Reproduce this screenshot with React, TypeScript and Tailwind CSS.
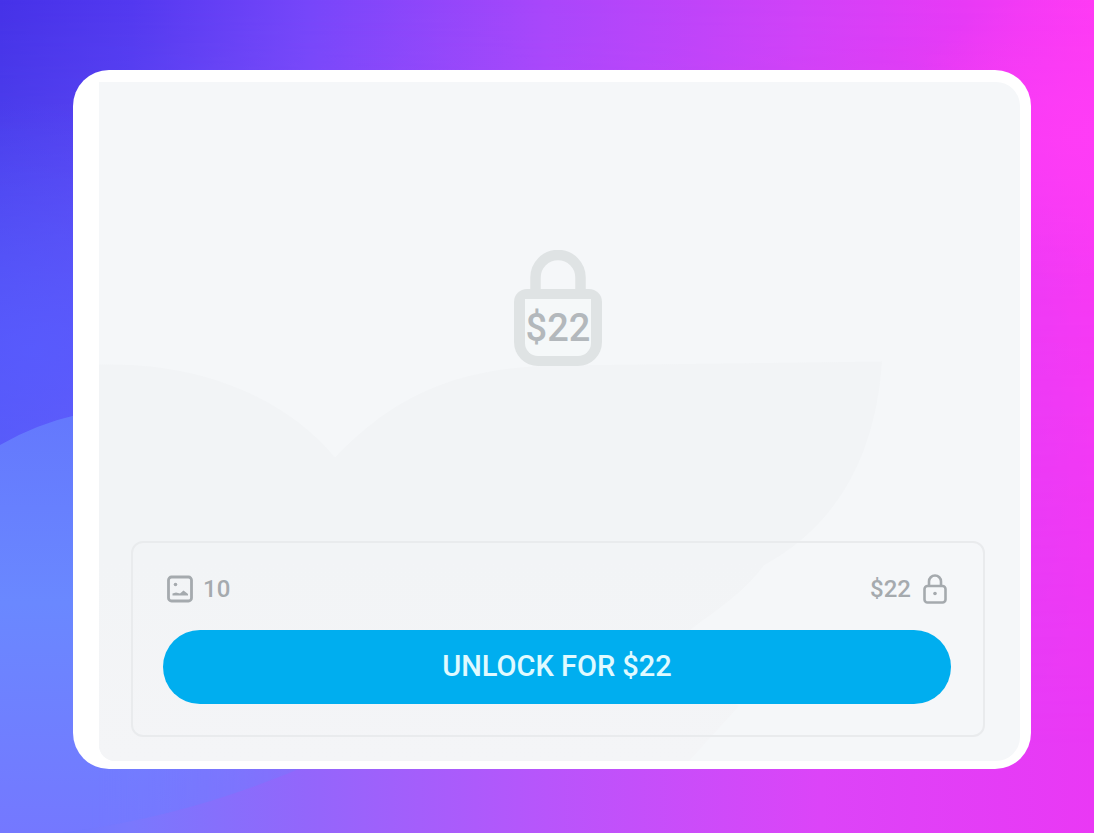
interface IconProps {
    className?: string;
}

interface LockedPostProps {
    mediaCount: number;
    price: string;
}

const ImageIcon: React.FC<IconProps> = ({className}) => (
    <svg viewBox="0 0 26 28" fill="none" className={className} aria-hidden="true">
        <rect x="1.5" y="2" width="23" height="24" rx="3" stroke="currentColor" strokeWidth="2.8"/>
        <circle cx="8.5" cy="9.5" r="1.8" fill="currentColor"/>
        <path d="M5.5 20.5 V18.5 L9 17.5 L13 18.5 L16.5 15.5 L21 19 V20.5 Z" fill="currentColor"/>
    </svg>
);

const SmallLockIcon: React.FC<IconProps> = ({className}) => (
    <svg viewBox="0 0 24 30" fill="none" className={className} aria-hidden="true">
        <path d="M6 12 V7.5 A6 6 0 0 1 18 7.5 V12" stroke="currentColor" strokeWidth="2.6"/>
        <rect x="1.5" y="12" width="21" height="16.5" rx="3" stroke="currentColor" strokeWidth="2.6"/>
        <circle cx="12" cy="19.5" r="1.8" fill="currentColor"/>
    </svg>
);

const BigLockIcon: React.FC<IconProps> = ({className}) => (
    <svg viewBox="0 0 88 116" fill="none" className={className} aria-hidden="true">
        <path d="M21.5 42 V27.5 A22.5 22.5 0 0 1 66.5 27.5 V42" stroke="#dfe3e4" strokeWidth="10.5"/>
        <path
            d="M13 39 H75 A13 13 0 0 1 88 52 V92 A24 24 0 0 1 64 116 H24 A24 24 0 0 1 0 92 V52 A13 13 0 0 1 13 39 Z"
            fill="#dfe3e4"
        />
        <path d="M11 49 H77 V93 A13 13 0 0 1 64 106 H24 A13 13 0 0 1 11 93 Z" fill="#f5f8f9"/>
    </svg>
);

const Backdrop: React.FC = () => (
    <svg
        viewBox="0 0 1094 833"
        preserveAspectRatio="none"
        className="absolute inset-0 -z-10 h-full w-full"
        aria-hidden="true"
    >
        <defs>
            <linearGradient id="top" x1="0" y1="0" x2="1" y2="0">
                <stop offset="0" stopColor="#4632e8"/>
                <stop offset="0.12" stopColor="#5339f0"/>
                <stop offset="0.28" stopColor="#7646fa"/>
                <stop offset="0.5" stopColor="#a947fb"/>
                <stop offset="0.73" stopColor="#d042f8"/>
                <stop offset="0.88" stopColor="#e83af6"/>
                <stop offset="1" stopColor="#ff3af4"/>
            </linearGradient>
            <linearGradient id="bottom" x1="0" y1="0" x2="1" y2="0">
                <stop offset="0" stopColor="#6478ff"/>
                <stop offset="0.12" stopColor="#7a78fd"/>
                <stop offset="0.28" stopColor="#9366fb"/>
                <stop offset="0.5" stopColor="#b855fb"/>
                <stop offset="0.75" stopColor="#dc44f8"/>
                <stop offset="1" stopColor="#ea38f5"/>
            </linearGradient>
            <linearGradient id="fade" x1="0" y1="0" x2="0" y2="1">
                <stop offset="0" stopColor="#fff" stopOpacity="0"/>
                <stop offset="0.9" stopColor="#fff"/>
            </linearGradient>
            <linearGradient id="blob" x1="0" y1="0" x2="0" y2="1">
                <stop offset="0" stopColor="#6478fd"/>
                <stop offset="0.45" stopColor="#6a88ff"/>
                <stop offset="1" stopColor="#7478ff"/>
            </linearGradient>
            <linearGradient id="blobEdge" x1="0" y1="0" x2="1" y2="0">
                <stop offset="0.2" stopColor="#fff"/>
                <stop offset="1" stopColor="#fff" stopOpacity="0"/>
            </linearGradient>
            <radialGradient id="left" cx="0.03" cy="0.42" r="0.3">
                <stop offset="0" stopColor="#585cff" stopOpacity="0.8"/>
                <stop offset="1" stopColor="#585cff" stopOpacity="0"/>
            </radialGradient>
            <radialGradient id="right" cx="1" cy="0.16" r="0.18">
                <stop offset="0" stopColor="#ff3cf6"/>
                <stop offset="1" stopColor="#ff3cf6" stopOpacity="0"/>
            </radialGradient>
            <mask id="fadeMask">
                <rect width="1094" height="833" fill="url(#fade)"/>
            </mask>
            <mask id="blobMask">
                <rect y="380" width="400" height="453" fill="url(#blobEdge)"/>
            </mask>
        </defs>
        <rect width="1094" height="833" fill="url(#top)"/>
        <rect width="1094" height="833" fill="url(#bottom)" mask="url(#fadeMask)"/>
        <rect width="1094" height="833" fill="url(#left)"/>
        <rect width="1094" height="833" fill="url(#right)"/>
        <path
            d="M0 445 Q36 424 80 414 L400 420 V720 Q240 808 80 830 L60 833 H0 Z"
            fill="url(#blob)"
            mask="url(#blobMask)"
        />
    </svg>
);

const PanelShade: React.FC = () => (
    <svg
        viewBox="0 0 921 680"
        preserveAspectRatio="none"
        className="absolute inset-0 -z-10 h-full w-full"
        aria-hidden="true"
    >
        <defs>
            <linearGradient id="shade" x1="0" y1="0" x2="0" y2="1">
                <stop offset="0.5" stopColor="#f2f4f6"/>
                <stop offset="1" stopColor="#f4f5f7"/>
            </linearGradient>
        </defs>
        <path
            d="M0 283 C100 280 185 315 236 376 C290 320 350 285 460 284 L783 280 C776 380 735 445 665 484 C630 530 590 540 560 580 L640 625 L590 680 H0 Z"
            fill="url(#shade)"
        />
    </svg>
);

const LockedPost: React.FC<LockedPostProps> = ({mediaCount, price}) => {
    return (
        <article className="flex flex-1 rounded-[36px] bg-white pt-3 pr-[11px] pb-2 pl-[26px]">
            <div
                className="relative isolate flex flex-1 flex-col overflow-hidden rounded-r-3xl rounded-bl-2xl bg-[#f5f7f9] pr-[35px] pb-6 pl-8"
            >
                <PanelShade/>
                <div className="grid flex-1 place-items-center pb-2">
                    <div className="relative">
                        <BigLockIcon className="h-[116px] w-[88px]"/>
                        <p className="absolute inset-x-0 top-14 text-center text-[38px] leading-[44px] font-medium text-[#b3b8bc]">
                            {price}
                        </p>
                    </div>
                </div>
                <section className="rounded-xl border-2 border-[#e9ebed] py-[31px] pr-8 pl-[30px]">
                    <div className="flex h-[30px] items-center justify-between px-1 text-2xl font-medium text-[#a5aaae]">
                        <span className="flex items-center gap-2.5">
                            <ImageIcon className="h-7 w-[26px]"/>
                            {mediaCount}
                        </span>
                        <span className="flex items-center gap-3">
                            {price}
                            <SmallLockIcon className="h-[30px] w-6"/>
                        </span>
                    </div>
                    <button
                        type="button"
                        className="mt-[26px] h-[74px] w-full cursor-pointer rounded-full bg-[#00aeef] text-[29px] font-medium text-[#e0faff]"
                    >
                        UNLOCK FOR {price}
                    </button>
                </section>
            </div>
        </article>
    );
};

export default function App() {
    return (
        <main
            className="relative isolate flex min-h-screen pt-[70px] pr-[63px] pb-16 pl-[73px] font-['Roboto',sans-serif]"
        >
            <Backdrop/>
            <LockedPost mediaCount={10} price="$22"/>
        </main>
    );
}
